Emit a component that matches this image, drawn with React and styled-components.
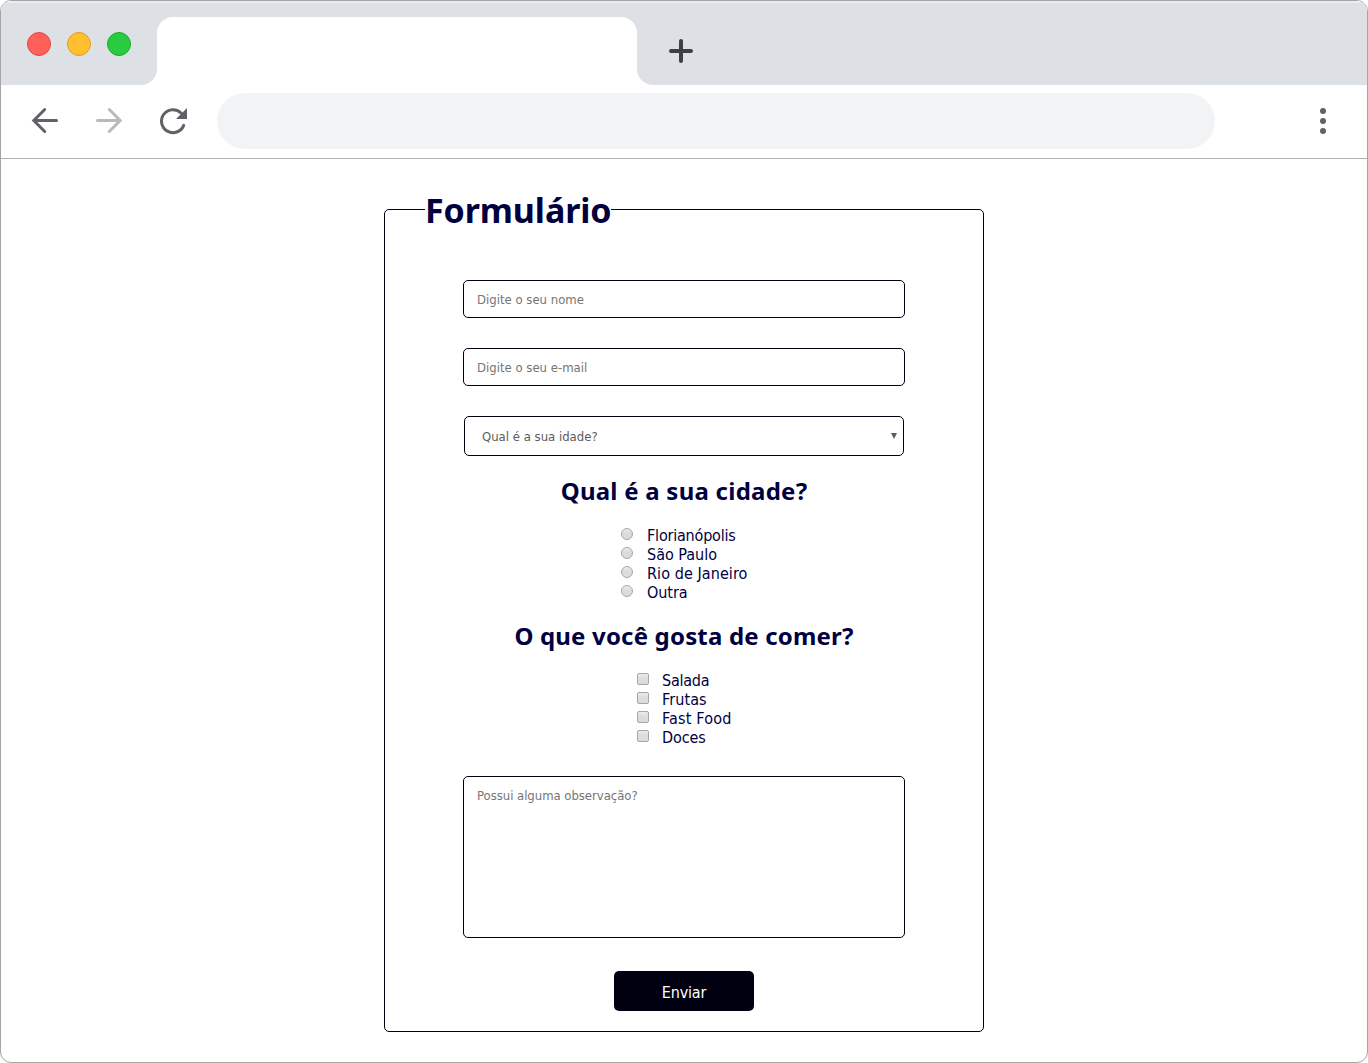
import React from 'react';
import styled, { createGlobalStyle } from 'styled-components';

const ink = '#000010';
const navy = '#00003f';
const sans = '"DejaVu Sans Condensed", "DejaVu Sans", sans-serif';
const display = '"Noto Sans", "DejaVu Sans Condensed", sans-serif';

const GlobalStyle = createGlobalStyle`
  * { box-sizing: border-box; }
  body { margin: 0; background: #fff; font-family: ${sans}; }
`;

const Window = styled.div`
  display: flex;
  flex-direction: column;
  width: 1368px;
  height: 1063px;
  border: 1px solid #a5a5a5;
  border-radius: 11px;
  background: #fff;
  overflow: hidden;
`;

const TabStrip = styled.div`
  display: flex;
  flex: none;
  height: 84px;
  background: #fff;
`;

const StripPart = styled.div`
  display: flex;
  background: #dde0e5;
  border-top: 2px solid #e9ebee;
  width: ${(p) => p.$width || 'auto'};
  flex: ${(p) => (p.$grow ? 1 : 'none')};
  padding: ${(p) => p.$padding};
  border-radius: ${(p) => p.$radius};
`;

const TabSlot = styled.div`
  display: flex;
  align-items: flex-end;
  width: 480px;
  background: #dde0e5;
  border-top: 2px solid #e9ebee;
`;

const Tab = styled.div`
  width: 100%;
  height: 68px;
  background: #fff;
  border-radius: 16px 16px 0 0;
`;

const Lights = styled.div`
  display: flex;
  gap: 16px;
`;

const Light = styled.span`
  width: 24px;
  height: 24px;
  border-radius: 50%;
  background: ${(p) => p.$fill};
  border: 1px solid ${(p) => p.$edge};
`;

const Toolbar = styled.div`
  display: flex;
  align-items: center;
  flex: none;
  height: 74px;
  padding: 0 28px 0 27px;
  border-bottom: 1px solid #b0b0b0;
`;

const NavButtons = styled.div`
  display: flex;
  gap: 32px;
  padding-bottom: 1px;
`;

const Icon = styled.svg`
  display: block;
  width: 32px;
  height: 32px;
  fill: none;
  stroke: ${(p) => p.$color};
  stroke-width: 3;
  stroke-linecap: round;
`;

const PlusIcon = styled(Icon)`
  stroke-width: 4;
`;

const AddressBar = styled.div`
  width: 998px;
  height: 56px;
  margin: 0 auto 1px 29px;
  border-radius: 28px;
  background: #f1f3f4;
`;

const Page = styled.main`
  display: flex;
  justify-content: center;
  align-items: flex-start;
  padding-top: 30px;
`;

const FormBox = styled.fieldset`
  display: block;
  width: 600px;
  height: 843px;
  margin: 0;
  padding: 0 40px;
  border: 1px solid ${ink};
  border-radius: 5px;
`;

const Title = styled.legend`
  padding: 0;
  height: 40px;
  width: 186px;
  line-height: 42px;
  font-family: ${display};
  font-size: 34px;
  font-weight: 700;
  letter-spacing: -0.1px;
  white-space: nowrap;
  color: ${navy};
`;

const Fields = styled.div`
  display: flex;
  flex-direction: column;
  align-items: center;
  padding-top: 51px;
`;

const Input = styled.input`
  width: 442px;
  height: 38px;
  margin: 0 0 30px;
  padding: 1px 13px 0;
  border: 1px solid ${ink};
  border-radius: 5px;
  background: #fff;
  font: 13px ${sans};
  color: ${navy};
  &::placeholder { color: #757575; opacity: 1; }
`;

const TextArea = styled.textarea`
  display: block;
  width: 442px;
  height: 162px;
  margin: 30px 0 33px;
  padding: 11px 13px;
  border: 1px solid ${ink};
  border-radius: 5px;
  background: #fff;
  resize: none;
  font: 13px ${sans};
  letter-spacing: -0.04px;
  &::placeholder { color: #757575; opacity: 1; }
`;

const Select = styled.button`
  display: flex;
  align-items: center;
  justify-content: space-between;
  width: 440px;
  height: 40px;
  margin: 0;
  padding: 1px 6px 0 17px;
  border: 1px solid ${ink};
  border-radius: 5px;
  background: #fff;
  font: 13px ${sans};
  color: #5c5c5c;
`;

const Arrow = styled.span`
  width: 6px;
  height: 6px;
  margin-bottom: 1px;
  background: #5c5c5c;
  clip-path: polygon(0 0, 100% 0, 50% 100%);
`;

const Question = styled.h2`
  margin: 20px 0;
  height: 29px;
  line-height: 29px;
  font-family: ${display};
  font-size: 24px;
  font-weight: 700;
  letter-spacing: ${(p) => p.$spacing}px;
  color: ${navy};
`;

const Options = styled.div`
  display: flex;
  flex-direction: column;
  width: ${(p) => p.$width}px;
`;

const Option = styled.label`
  display: flex;
  align-items: center;
  gap: ${(p) => p.$gap}px;
  height: 19px;
  padding-top: 2px;
  line-height: 17px;
  font-size: 16px;
  letter-spacing: ${(p) => p.$spacing || 0}px;
  white-space: nowrap;
  color: ${navy};
`;

const Choice = styled.input`
  appearance: none;
  flex: none;
  width: 12px;
  height: 12px;
  margin: 0 0 4px 1px;
  border: 1px solid #a6a6a6;
  border-radius: ${(p) => (p.type === 'radio' ? '50%' : '2px')};
  background: linear-gradient(#ececec, #dcdcdc 45%, #dcdcdc);
`;

const Submit = styled.button`
  width: 140px;
  height: 40px;
  padding: 2px 0 0;
  border: 0;
  border-radius: 5px;
  background: ${ink};
  color: #fff;
  font: 16px ${sans};
  letter-spacing: -0.2px;
`;

const cities = [
  ['Florianópolis', -0.2],
  ['São Paulo', 0],
  ['Rio de Janeiro', 0.08],
  ['Outra', -0.05],
];
const foods = [
  ['Salada', -0.25],
  ['Frutas', 0.1],
  ['Fast Food', 0.2],
  ['Doces', -0.1],
];

export default function App() {
  return (
    <>
      <GlobalStyle />
      <Window>
        <TabStrip>
          <StripPart $width="156px" $padding="29px 0 0 26px" $radius="0 0 16px 0">
            <Lights>
              <Light $fill="#ff6059" $edge="#e2483f" />
              <Light $fill="#ffbf2f" $edge="#dfa023" />
              <Light $fill="#29cc41" $edge="#1aaa29" />
            </Lights>
          </StripPart>
          <TabSlot>
            <Tab />
          </TabSlot>
          <StripPart $grow $padding="32px 0 0 28px" $radius="0 0 0 16px">
            <PlusIcon viewBox="0 0 32 32" $color="#3c4043">
              <path d="M16 6v20M6 16h20" />
            </PlusIcon>
          </StripPart>
        </TabStrip>
        <Toolbar>
          <NavButtons>
            <Icon viewBox="0 0 32 32" $color="#5f6368">
              <path d="M28.5 15.5H6M16.7 4.5L5.8 15.5l10.9 11" />
            </Icon>
            <Icon viewBox="0 0 32 32" $color="#bababa">
              <path d="M5.5 15.5H28M17.3 4.5L28.2 15.5 17.3 26.5" />
            </Icon>
            <Icon viewBox="0 0 32 32" $color="#5f6368">
              <path d="M27.7 20.4A11.5 11.5 0 1 1 25.3 8.2" />
              <path d="M31 3v11H20z" fill="#5f6368" stroke="none" />
            </Icon>
          </NavButtons>
          <AddressBar />
          <Icon viewBox="0 0 32 32" $color="#5f6368">
            <g fill="#5f6368" stroke="none">
              <circle cx="16" cy="5" r="3" />
              <circle cx="16" cy="15" r="3" />
              <circle cx="16" cy="25" r="3" />
            </g>
          </Icon>
        </Toolbar>
        <Page>
          <FormBox>
            <Title>Formulário</Title>
            <Fields>
              <Input type="text" placeholder="Digite o seu nome" />
              <Input type="email" placeholder="Digite o seu e-mail" />
              <Select type="button">
                Qual é a sua idade?
                <Arrow />
              </Select>
              <Question $spacing={0.24}>Qual é a sua cidade?</Question>
              <Options $width={128}>
                {cities.map(([name, spacing]) => (
                  <Option key={name} $spacing={spacing} $gap={14}>
                    <Choice type="radio" name="cidade" />
                    {name}
                  </Option>
                ))}
              </Options>
              <Question $spacing={0.18}>O que você gosta de comer?</Question>
              <Options $width={96}>
                {foods.map(([name, spacing]) => (
                  <Option key={name} $spacing={spacing} $gap={13}>
                    <Choice type="checkbox" />
                    {name}
                  </Option>
                ))}
              </Options>
              <TextArea placeholder="Possui alguma observação?" />
              <Submit type="button">Enviar</Submit>
            </Fields>
          </FormBox>
        </Page>
      </Window>
    </>
  );
}
